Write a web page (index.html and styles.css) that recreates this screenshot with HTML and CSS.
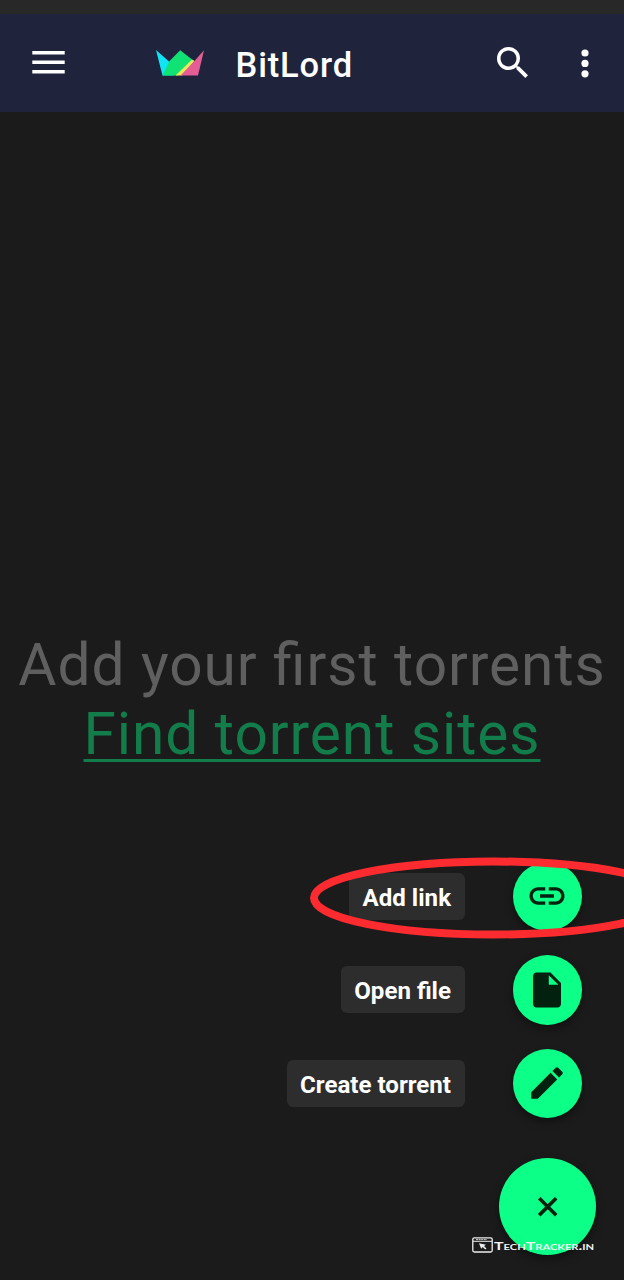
FILE: index.html
```html
<!DOCTYPE html>
<html lang="en">
<head>
<meta charset="utf-8">
<title>BitLord</title>
<link rel="stylesheet" href="styles.css">
</head>
<body>
<div class="screen">
  <div class="statusbar"></div>
  <header class="appbar">
    <svg class="menu" viewBox="0 0 33 24"><path d="M.3 1h32.400v3.600H.3zM.3 10.500h32.400v3.600H.3zM.3 20h32.400v3.600H.3z" fill="#fff"/></svg>
    <svg class="crown" viewBox="0 0 48 26">
      <path d="M0 0L13 11.500L18 25.500H6.500z" fill="#10e4f5"/>
      <path d="M6.500 25.500L13.500 11L24.200 .3L38 11L22 25.500z" fill="#10e273"/>
      <path d="M19.500 25.500L36 9.500L38.500 11L26 25.500z" fill="#e9e95b"/>
      <path d="M24.500 25.500L38 11.500L48 .3L42 25.500z" fill="#e45d94"/>
    </svg>
    <h1 class="title">BitLord</h1>
    <svg class="search" viewBox="3 3 17.500 17.500"><path fill="#fff" d="M15.500 14h-.79l-.28-.27A6.470 6.470 0 0 0 16 9.500 6.500 6.500 0 1 0 9.500 16c1.610 0 3.090-.59 4.230-1.570l.27.28v.79l5 4.990L20.490 19l-4.990-5zm-6 0C7.010 14 5 11.990 5 9.500S7.010 5 9.500 5 14 7.010 14 9.500 11.990 14 9.500 14z"/></svg>
    <svg class="more" viewBox="0 0 8 29"><g fill="#fff"><circle cx="4" cy="4" r="3.600"/><circle cx="4" cy="14.400" r="3.600"/><circle cx="4" cy="24.800" r="3.600"/></g></svg>
  </header>
  <main class="content">
    <div class="empty">
      <p class="hint">Add your first torrents</p>
      <a class="sites">Find torrent sites</a>
    </div>
    <div class="actions">
      <div class="action"><span class="label">Add link</span><span class="mini">
        <svg viewBox="0 0 24 24"><path d="M3.900 12c0-1.710 1.390-3.100 3.100-3.100h4V7H7c-2.760 0-5 2.240-5 5s2.240 5 5 5h4v-1.900H7c-1.710 0-3.100-1.390-3.100-3.100zM8 13h8v-2H8v2zm9-6h-4v1.900h4c1.710 0 3.100 1.390 3.100 3.100s-1.390 3.100-3.100 3.100h-4V17h4c2.760 0 5-2.240 5-5s-2.240-5-5-5z"/></svg></span></div>
      <div class="action"><span class="label">Open file</span><span class="mini">
        <svg viewBox="0 0 24 24"><path d="M6 2c-1.100 0-1.990.9-1.990 2L4 20c0 1.100.89 2 1.990 2H18c1.100 0 2-.9 2-2V8l-6-6H6zm7 7V3.500L18.500 9H13z"/></svg></span></div>
      <div class="action"><span class="label">Create torrent</span><span class="mini">
        <svg viewBox="0 0 24 24"><path d="M3 17.250V21h3.750L17.810 9.940l-3.750-3.750L3 17.250zM20.710 7.040c.39-.39.39-1.020 0-1.410l-2.340-2.340c-.39-.39-1.020-.39-1.410 0l-1.830 1.830 3.750 3.750 1.830-1.830z"/></svg></span></div>
      <div class="fab"><svg viewBox="0 0 20 20"><path d="M1.200 1.200l17 17M18.200 1.200l-17 17"/></svg></div>
    </div>
  </main>
  <svg class="highlight" viewBox="0 0 320 90"><ellipse cx="187" cy="45" rx="179" ry="36.500"/></svg>
  <div class="credit">
    <svg viewBox="0 0 21 16"><rect x=".8" y=".8" width="19.400" height="14.200" rx="1.500" fill="none" stroke="#eee" stroke-width="1.300"/><path d="M1 4.300h19" stroke="#eee" stroke-width="1"/><path d="M4 2.600h11" stroke="#ccc" stroke-width="1" stroke-dasharray="2 .6"/><path d="M7 6.300l7 1.500-2 1.200 2.500 2.500-1.300 1-2.500-2.500-1.500 1.700z" fill="#eee"/></svg>
    <span class="brand">TechTracker.in</span>
  </div>
</div>
</body>
</html>
```
FILE: styles.css
```css
* { box-sizing: border-box; }
body { margin: 0; background: #1b1b1b; font-family: Roboto, "Liberation Sans", sans-serif; }
.screen { position: relative; width: 624px; height: 1280px; overflow: hidden; display: flex; flex-direction: column; }
.statusbar { height: 14px; background: #282828; }
.appbar { height: 98px; background: #1f233c; display: flex; align-items: flex-start; padding: 36px 35px 0 32px; }
.appbar svg { display: block; flex: none; }
.menu { width: 33px; height: 24px; }
.crown { width: 48px; height: 26px; margin-left: 91px; }
.title { margin: -6px 0 0 31.5px; flex: 1; font-size: 34.5px; line-height: 42px; font-weight: 500; color: #fff; letter-spacing: .85px; }
.search { width: 31px; height: 31px; margin: -3px 53px 0 0; }
.more { width: 8px; height: 29px; margin-top: -1px; }
.content { flex: 1; display: flex; flex-direction: column; justify-content: space-between; padding: 519px 0 25px; }
.empty { display: flex; flex-direction: column; align-items: center; font-size: 58.6px; line-height: 69px; white-space: nowrap; letter-spacing: .95px; font-feature-settings: "liga" 1; }
.hint { margin: 0; color: #5f5f5f; }
.sites { color: #127c4a; text-decoration: underline; text-decoration-thickness: 3px; text-underline-offset: 5px; text-decoration-skip-ink: none; }
.actions { display: flex; flex-direction: column; align-items: flex-end; gap: 24px; padding-right: 28px; }
.action { display: flex; align-items: center; gap: 48px; margin-right: 14px; }
.label { height: 47px; padding: 0 13.5px; border-radius: 6px; background: #2d2d2d; color: #fff; font-size: 24.1px; line-height: 50px; font-weight: 700; white-space: nowrap; }
.mini { width: 69.5px; height: 69.5px; border-radius: 50%; background: #0cff86; display: grid; place-items: center; box-shadow: 0 4px 8px #0006; }
.mini svg { width: 42px; height: 42px; fill: #03210f; }
.fab { width: 97px; height: 97px; margin-top: 16px; border-radius: 50%; background: #0cff86; display: grid; place-items: center; box-shadow: 0 4px 10px #0006; }
.fab svg { width: 20px; height: 20px; fill: none; stroke: #03210f; stroke-width: 3.6; }
.highlight { position: absolute; left: 306px; top: 853px; width: 320px; height: 90px; fill: none; stroke: #fc2b2f; stroke-width: 8; }
.credit { position: absolute; left: 472px; top: 1237px; display: flex; align-items: center; gap: 1px; color: #f4f4f4; }
.credit svg { width: 21px; height: 16px; }
.brand { font: 700 11.5px/16px Lato, sans-serif; font-variant-caps: small-caps; white-space: nowrap; transform: translateY(1px) scaleX(1.39); transform-origin: left; }
```
